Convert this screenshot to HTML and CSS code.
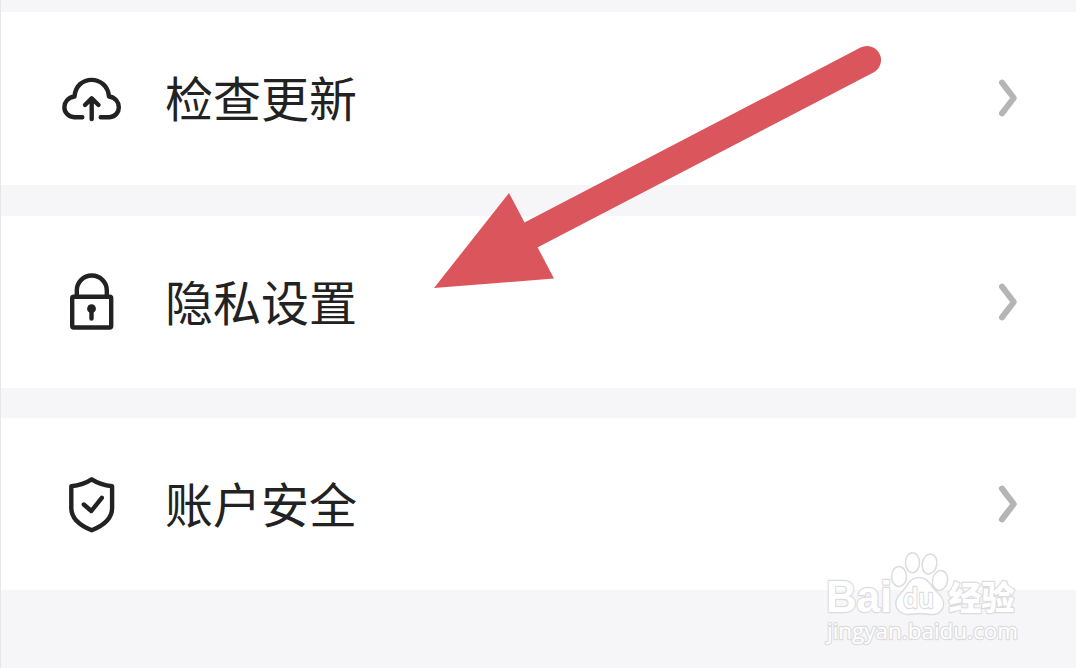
FILE: index.html
```html
<!DOCTYPE html>
<html lang="zh-CN">
<head>
    <meta charset="UTF-8">
    <meta name="viewport" content="width=device-width, initial-scale=1.0">
    <title>设置</title>
    <link rel="stylesheet" href="styles.css">
</head>
<body>
    <div class="settings">
        <div class="row row-update">
            <svg class="icon" viewBox="0 0 64 64">
                <path d="M22.3 51.3H14.5C1 50 1 32.500 14.500 30.500C16 8.300 47 8.300 49 30.500C62 32.500 62 50 49.500 51.300H40.700"/>
                <path d="M31.700 53V32.500M25 39L31.700 32.300L38.500 39"/>
            </svg>
            <span class="label">检查更新</span>
            <svg class="chevron" viewBox="0 0 24 44"><path d="M6 6.700L17.800 22L6 37.300"/></svg>
        </div>
        <div class="row">
            <svg class="icon" viewBox="0 0 64 64">
                <rect x="12.200" y="26.700" width="39" height="30.800" rx="1.500"/>
                <path d="M16.800 26V20.500A15 15 0 0 1 46.800 20.500V26"/>
                <circle class="solid" cx="31.500" cy="38.700" r="4.400"/>
                <path d="M31.500 39V48.500"/>
            </svg>
            <span class="label">隐私设置</span>
            <svg class="chevron" viewBox="0 0 24 44"><path d="M6 6.700L17.800 22L6 37.300"/></svg>
        </div>
        <div class="row">
            <svg class="icon" viewBox="0 0 64 64">
                <path d="M31.700 7.300Q23 13 11.300 14.200V36C11.300 46 18.500 53 31.700 58.200C44.900 53 52.100 46 52.100 36V14.200Q40.400 13 31.700 7.300Z"/>
                <path d="M23.800 32.500L31.300 39L41.800 25.800"/>
            </svg>
            <span class="label">账户安全</span>
            <svg class="chevron" viewBox="0 0 24 44"><path d="M6 6.700L17.800 22L6 37.300"/></svg>
        </div>
    </div>

    <svg class="arrow" viewBox="0 0 460 260">
        <path class="shaft" d="M105 200L443 24"/>
        <path class="head" d="M10 252L85 157L130 242.500Z"/>
    </svg>

    <svg class="watermark" viewBox="0 0 220 115">
        <text class="mark-bai" x="16" y="72" textLength="66" lengthAdjust="spacingAndGlyphs">Bai</text>
        <ellipse cx="89" cy="36.500" rx="7.500" ry="10"/>
        <ellipse cx="102.500" cy="22.700" rx="7" ry="10"/>
        <ellipse cx="119.500" cy="24" rx="7.300" ry="10" transform="rotate(12 119.500 24)"/>
        <ellipse cx="130" cy="40.500" rx="7.500" ry="10" transform="rotate(12 130 40.500)"/>
        <path d="M109 37.500C99 37.500 98 46 91 53C85 59 84 66 89 71C96 77 103 73.500 110 73.500S126 77 131 71C136 65 133 58 128 53C120 46 119 37.500 109 37.500Z"/>
        <text class="mark-du" x="93" y="67.500" textLength="31" lengthAdjust="spacingAndGlyphs">du</text>
        <text class="mark-cn" x="138.500" y="70" textLength="66">经验</text>
        <text class="mark-url" x="17" y="98.500" textLength="191" lengthAdjust="spacingAndGlyphs">jingyan.baidu.com</text>
    </svg>
</body>
</html>
```
FILE: styles.css
```css
* {
    margin: 0;
    padding: 0;
    box-sizing: border-box;
}
body {
    position: relative;
    height: 668px;
    overflow: hidden;
    background: #f6f6f8;
    font-family: "Noto Sans CJK SC", sans-serif;
}
.settings {
    display: flex;
    flex-direction: column;
    gap: 30px;
    height: 668px;
    padding-top: 12px;
    border-left: 1px solid #e6e6e8;
}
.row {
    display: flex;
    align-items: center;
    height: 172px;
    padding: 0 56px 0 59px;
    background: #fff;
}
.row-update {
    height: 174px;
    padding-bottom: 1px;
    border-bottom: 1px solid #f6f6f8;
}
.icon {
    width: 64px;
    height: 64px;
    fill: none;
    stroke: #222;
    stroke-width: 4.4;
    stroke-linecap: round;
    stroke-linejoin: round;
}
.icon .solid {
    fill: #222;
    stroke: none;
}
.label {
    flex: 1;
    margin: 0 0 5px 41px;
    font-size: 48px;
    line-height: 72px;
    color: #222;
}
.chevron {
    width: 24px;
    height: 44px;
    fill: none;
    stroke: #b5b5b5;
    stroke-width: 6;
    stroke-linecap: round;
    stroke-linejoin: round;
}
.arrow {
    position: absolute;
    left: 424px;
    top: 36px;
    width: 460px;
    height: 260px;
}
.arrow .shaft {
    fill: none;
    stroke: #db565c;
    stroke-width: 28;
    stroke-linecap: round;
}
.arrow .head {
    fill: #db565c;
}
.watermark {
    position: absolute;
    left: 810px;
    top: 540px;
    width: 220px;
    height: 115px;
    fill: #fff;
    stroke: #dcdcde;
    stroke-width: 1.5;
}
.watermark text {
    paint-order: stroke;
    stroke-width: 2.4;
    stroke-linejoin: round;
}
.mark-bai {
    font: bold 44px "Liberation Sans", sans-serif;
}
.mark-du {
    font: 600 27px "Open Sans", sans-serif;
}
.mark-cn {
    font: 900 33px "Noto Sans CJK SC", sans-serif;
}
.mark-url {
    font: 500 22px "Open Sans", sans-serif;
}
```
